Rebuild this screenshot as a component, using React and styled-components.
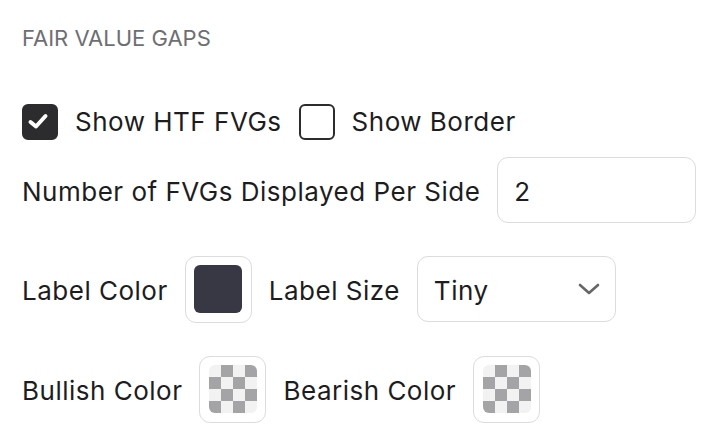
import React from "react";
import styled, { createGlobalStyle } from "styled-components";

const Global = createGlobalStyle`
  html, body { margin: 0; padding: 0; background: #fff; }
  body { font-family: Inter, "Noto Sans", sans-serif; color: #1d1d1f; }
`;

const Panel = styled.div`
  width: 726px;
  height: 446px;
  box-sizing: border-box;
  padding: 23px 0 0 22px;
  display: flex;
  flex-direction: column;
  overflow: hidden;
`;

const Title = styled.div`
  font-size: 22px;
  line-height: 30px;
  color: #6e6e73;
  letter-spacing: 0;
  margin-bottom: 51px;
`;

const Row = styled.div`
  display: flex;
  align-items: center;
  gap: 17px;
  height: ${(p) => p.$h || 66}px;
  margin-bottom: ${(p) => p.$mb || 0}px;
`;

const Label = styled.span`
  font-size: 26px;
  line-height: 32px;
  letter-spacing: 0.5px;
  color: #1d1d1f;
  white-space: nowrap;
  padding-top: ${(p) => (p.$low ? 3 : 0)}px;
`;

const Box = styled.span`
  width: 36px;
  height: 36px;
  box-sizing: border-box;
  border-radius: 6px;
  flex: none;
  display: flex;
  align-items: center;
  justify-content: center;
  background: ${(p) => (p.$checked ? "#2c2c2e" : "#fff")};
  border: 2px solid #2c2c2e;
`;

const Field = styled.div`
  width: 199px;
  height: 66px;
  box-sizing: border-box;
  border: 1.5px solid #dcdcdc;
  border-radius: 11px;
  display: flex;
  align-items: center;
  justify-content: space-between;
  padding: 3px 15px 0 16px;
  font-size: 26px;
  letter-spacing: 0.5px;
  color: #1d1d1f;
  flex: none;
`;

const SwatchFrame = styled.div`
  width: 67px;
  height: 67px;
  box-sizing: border-box;
  border: 1.5px solid #dcdcdc;
  border-radius: 11px;
  display: flex;
  align-items: center;
  justify-content: center;
  flex: none;
`;

const Swatch = styled.div`
  width: 48px;
  height: 48px;
  border-radius: 6px;
  overflow: hidden;
  background: ${(p) => p.$color || "transparent"};
  ${(p) =>
    p.$empty &&
    `
    background-color: #f2f2f2;
    background-image:
      linear-gradient(45deg, #a4a4a7 25%, transparent 25%, transparent 75%, #a4a4a7 75%),
      linear-gradient(45deg, #a4a4a7 25%, transparent 25%, transparent 75%, #a4a4a7 75%);
    background-size: 24px 24px;
    background-position: 0 0, 12px 12px;
  `}
`;

const Check = ({ checked }) => (
  <Box $checked={checked}>
    {checked && (
      <svg width="36" height="36" viewBox="0 0 36 36" style={{ flex: "none" }}>
        <polyline
          points="8.5,18 14,22.5 23.5,12"
          fill="none"
          stroke="#fff"
          strokeWidth="4"
          strokeLinecap="round"
          strokeLinejoin="round"
        />
      </svg>
    )}
  </Box>
);

const Chevron = () => (
  <svg width="22" height="14" viewBox="0 0 22 14" style={{ marginTop: -3 }}>
    <polyline
      points="2,3 11,11 20,3"
      fill="none"
      stroke="#666"
      strokeWidth="2.6"
      strokeLinecap="round"
      strokeLinejoin="round"
    />
  </svg>
);

export default function App() {
  return (
    <>
      <Global />
      <Panel>
        <Title>FAIR VALUE GAPS</Title>
        <Row $h={36} $mb={17}>
          <Check checked />
          <Label>Show HTF FVGs</Label>
          <Check />
          <Label>Show Border</Label>
        </Row>
        <Row $mb={33}>
          <Label $low>Number of FVGs Displayed Per Side</Label>
          <Field>2</Field>
        </Row>
        <Row $mb={34}>
          <Label $low>Label Color</Label>
          <SwatchFrame>
            <Swatch $color="#373844" />
          </SwatchFrame>
          <Label $low>Label Size</Label>
          <Field>
            <span>Tiny</span>
            <Chevron />
          </Field>
        </Row>
        <Row>
          <Label $low>Bullish Color</Label>
          <SwatchFrame>
            <Swatch $empty />
          </SwatchFrame>
          <Label $low>Bearish Color</Label>
          <SwatchFrame>
            <Swatch $empty />
          </SwatchFrame>
        </Row>
      </Panel>
    </>
  );
}
